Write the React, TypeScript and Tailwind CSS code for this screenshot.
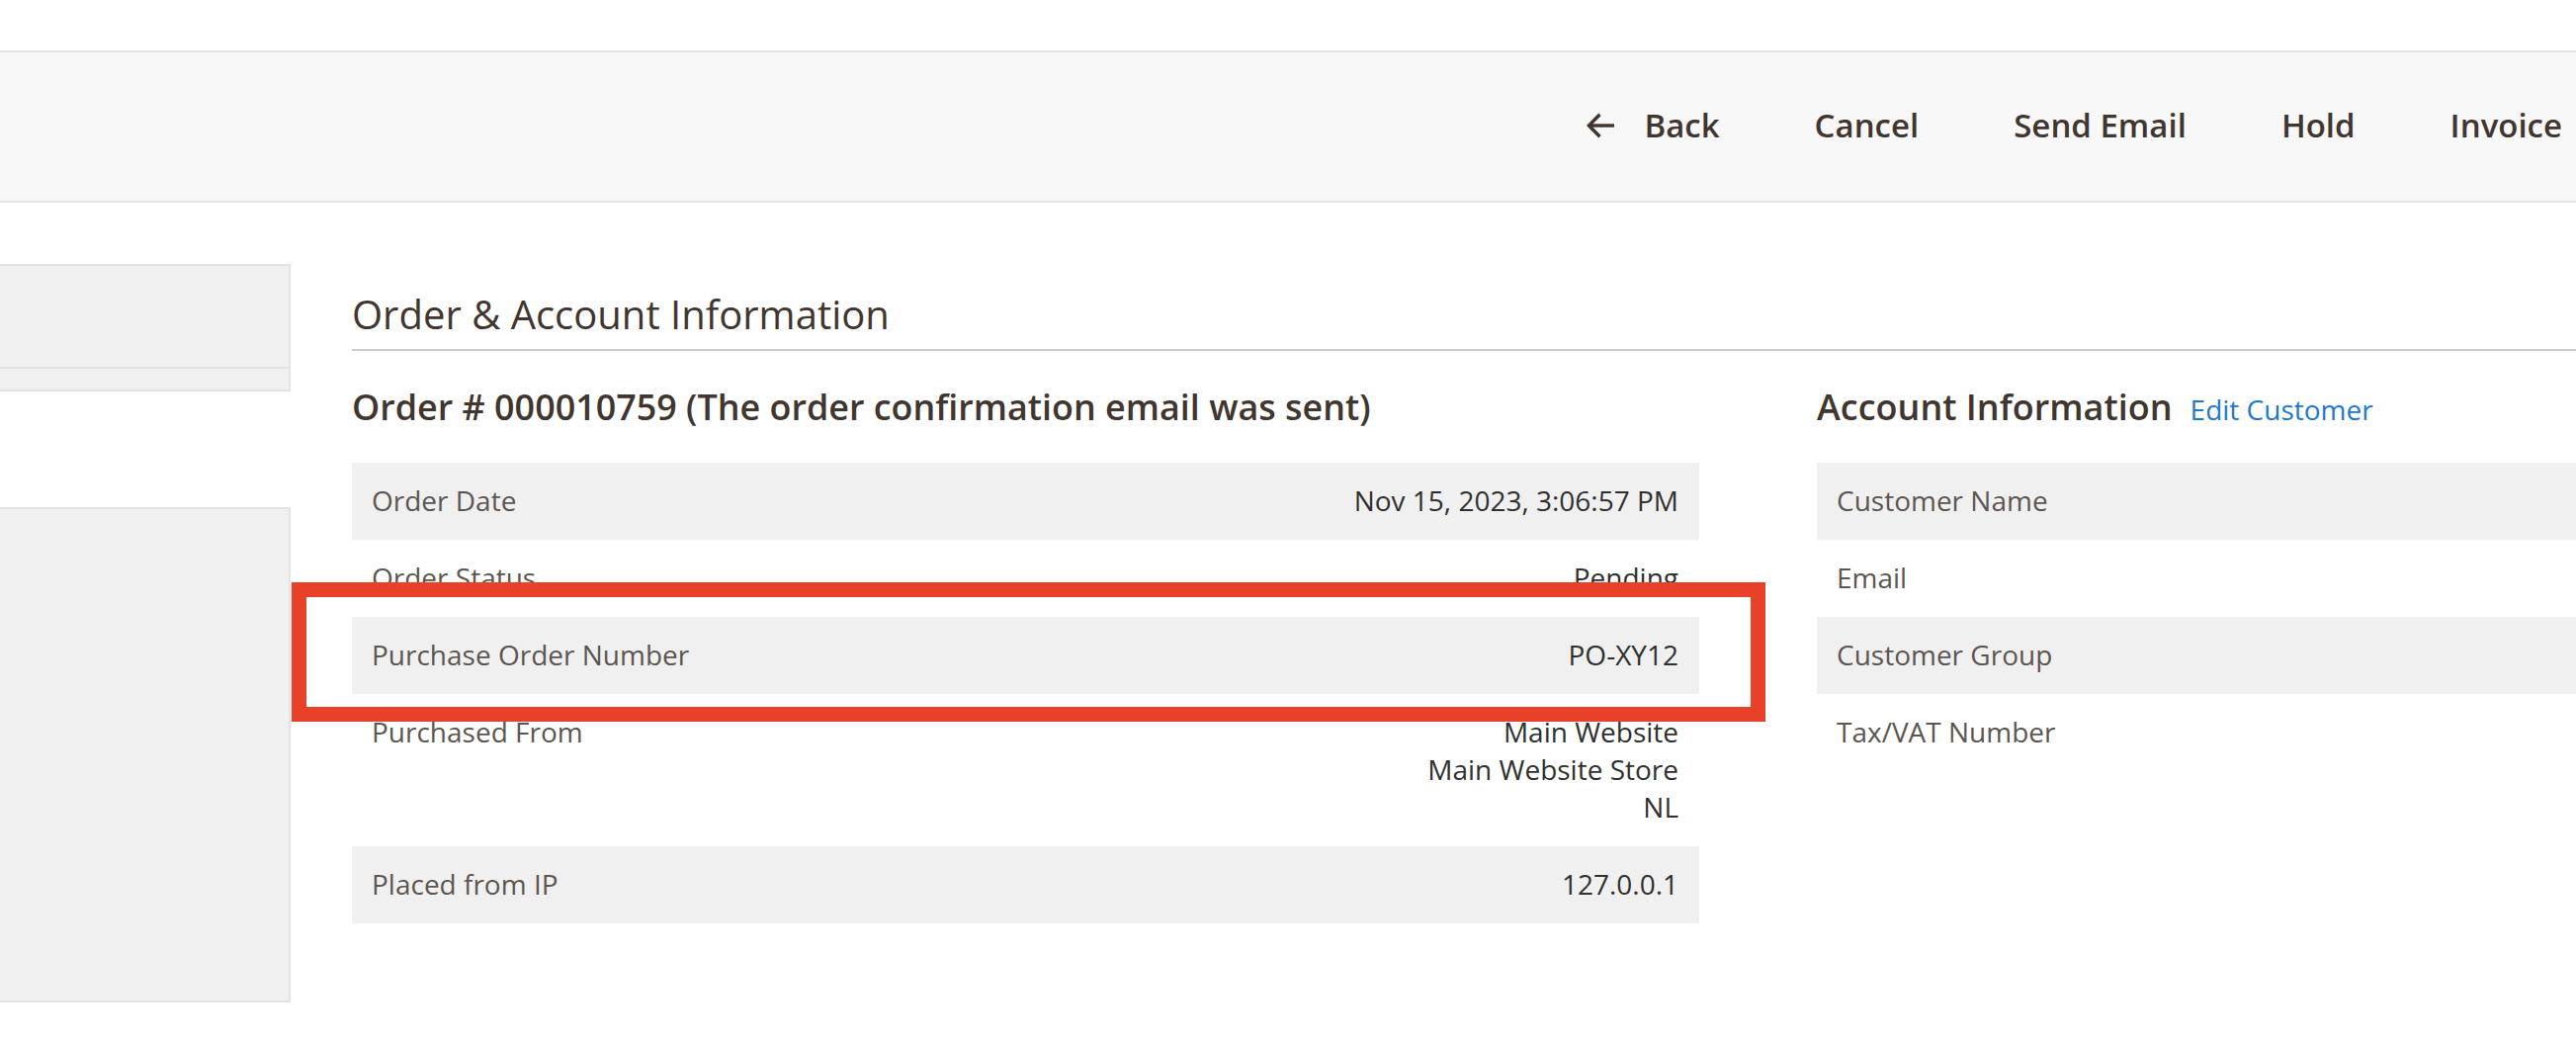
import React from "react";

type Row = { label: string; value?: string[]; shaded: boolean };

const orderRows: Row[] = [
  { label: "Order Date", value: ["Nov 15, 2023, 3:06:57 PM"], shaded: true },
  { label: "Order Status", value: ["Pending"], shaded: false },
  { label: "Purchase Order Number", value: ["PO-XY12"], shaded: true },
  { label: "Purchased From", value: ["Main Website", "Main Website Store", "NL"], shaded: false },
  { label: "Placed from IP", value: ["127.0.0.1"], shaded: true },
];

const accountRows: Row[] = [
  { label: "Customer Name", shaded: true },
  { label: "Email", shaded: false },
  { label: "Customer Group", shaded: true },
  { label: "Tax/VAT Number", shaded: false },
];

function InfoTable({ rows }: { rows: Row[] }) {
  return (
    <div className="flex flex-col">
      {rows.map((r) => (
        <div
          key={r.label}
          className={`flex justify-between px-[20px] pt-[19px] pb-[21px] text-[28px] leading-[38px] ${
            r.shaded ? "bg-[#f0f0f0]" : "bg-white"
          }`}
        >
          <span className="text-[#5d5650]">{r.label}</span>
          {r.value && (
            <span className="flex flex-col items-end text-right text-[#303030] pr-[1px]">
              {r.value.map((v) => (
                <span key={v}>{v}</span>
              ))}
            </span>
          )}
        </div>
      ))}
    </div>
  );
}

function BackArrow() {
  return (
    <svg width="29" height="26" viewBox="0 0 29 26" fill="none" className="shrink-0">
      <path d="M28 13H3" stroke="#41362f" strokeWidth="3.4" strokeLinecap="butt" />
      <path d="M13.5 1.8L2.4 13L13.5 24.2" stroke="#41362f" strokeWidth="3.4" strokeLinecap="butt" strokeLinejoin="miter" />
    </svg>
  );
}

export default function App() {
  return (
    <div
      className="relative w-[2606px] h-[1054px] overflow-hidden bg-white"
      style={{ fontFamily: '"Open Sans", "Noto Sans", sans-serif' }}
    >
      {/* Toolbar */}
      <div className="mt-[51px] h-[154px] border-y-2 border-[#e3e3e3] bg-[#f8f8f8] flex items-center justify-end pr-[14px] pb-[3px]">
        <div className="flex items-center gap-[96px] text-[33px] font-semibold text-[#41362f] leading-none">
          <button className="flex items-center gap-[29px] ml-[2px]">
            <BackArrow />
            <span>Back</span>
          </button>
          <button>Cancel</button>
          <button>Send Email</button>
          <button>Hold</button>
          <button>Invoice</button>
        </div>
      </div>

      {/* Content */}
      <div className="flex gap-[62px]">
        {/* Sidebar */}
        <div className="w-[294px] shrink-0 flex flex-col">
          <div className="mt-[62px] h-[129px] border-y-2 border-r-2 border-[#e3e3e3] bg-[#f0f0f0] flex flex-col">
            <div className="h-[104px] border-b-2 border-[#e3e3e3]" />
          </div>
          <div className="mt-[117px] h-[501px] border-y-2 border-r-2 border-[#e3e3e3] bg-[#f0f0f0]" />
        </div>

        {/* Main */}
        <div className="w-[2900px] shrink-0 flex flex-col text-[#41362f]">
          <h1 className="mt-[90px] pb-[12px] border-b-2 border-[#cccccc] text-[40px] leading-[46px] font-normal text-[#41362f]">
            Order &amp; Account Information
          </h1>

          <div className="flex gap-[119px]">
            <div className="w-[1363px] shrink-0 flex flex-col">
              <h2 className="mt-[35px] text-[35.9px] leading-[44px] font-semibold text-[#41362f]">
                Order # 000010759 (The order confirmation email was sent)
              </h2>
              <div className="mt-[34px]">
                <InfoTable rows={orderRows} />
              </div>
            </div>

            <div className="w-[1363px] shrink-0 flex flex-col">
              <div className="mt-[35px] flex items-baseline gap-[18px]">
                <h2 className="text-[36px] leading-[44px] font-semibold text-[#41362f]">Account Information</h2>
                <a className="text-[28px] leading-[38px] text-[#1f78d1]" href="#">
                  Edit Customer
                </a>
              </div>
              <div className="mt-[34px]">
                <InfoTable rows={accountRows} />
              </div>
            </div>
          </div>
        </div>
      </div>

      {/* Annotation highlight */}
      <div className="absolute left-[295px] top-[589px] w-[1491px] h-[141px] border-[15px] border-[#e94129] pointer-events-none" />
    </div>
  );
}
